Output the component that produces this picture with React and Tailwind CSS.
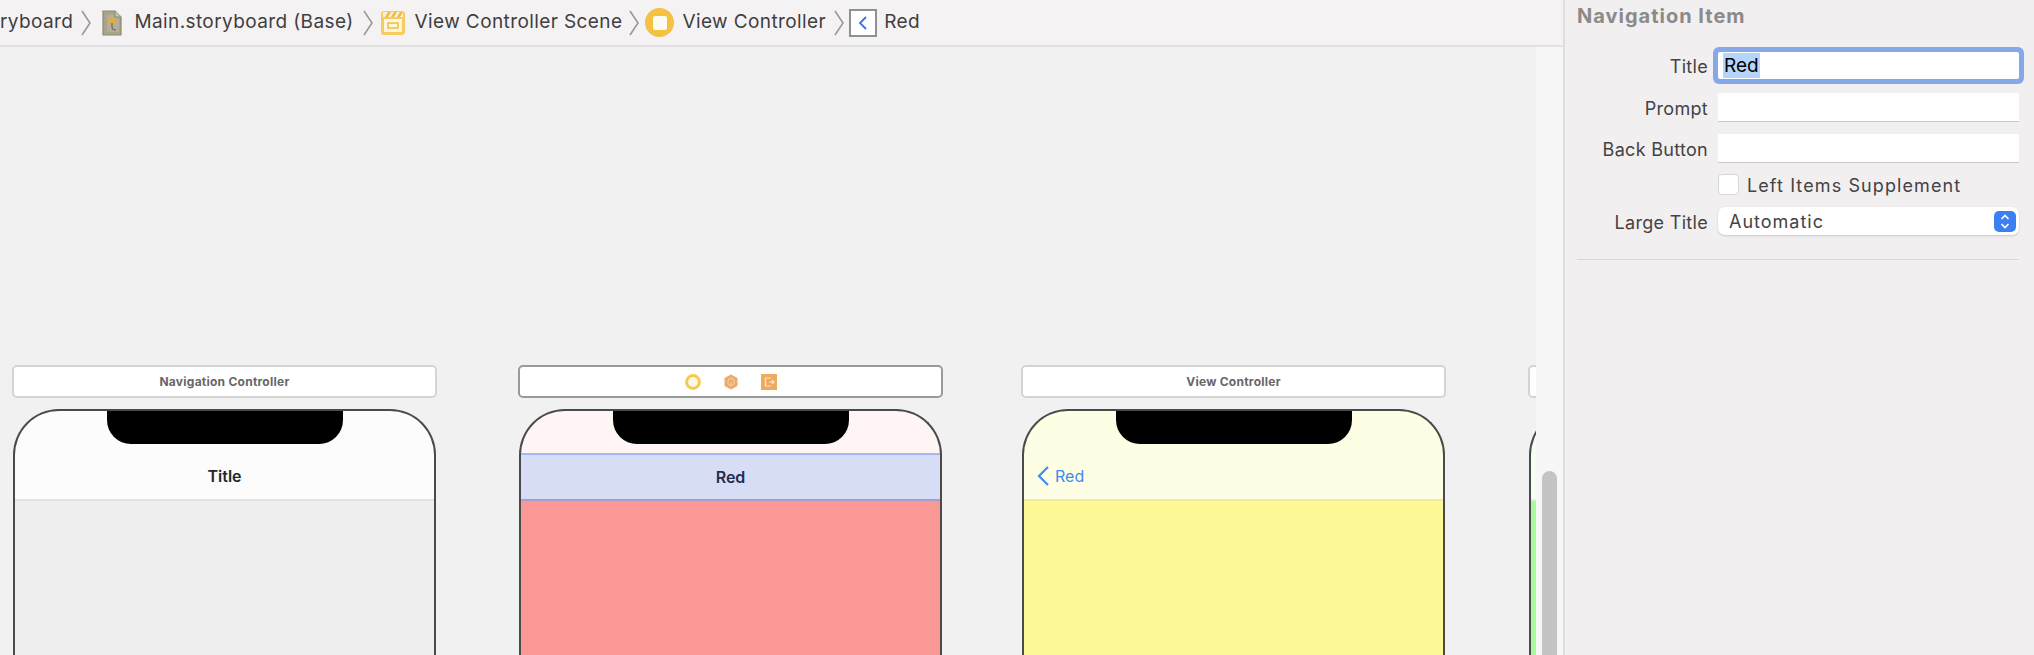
import React from "react";

const font = { fontFamily: "Inter, 'Liberation Sans', sans-serif" };

const Chevron = () => (
  <svg width="10" height="26" viewBox="0 0 10 26" className="shrink-0">
    <path d="M1 1 L9 13 L1 25" fill="none" stroke="#9a9899" strokeWidth="1.6" />
  </svg>
);

const FileIcon = () => (
  <svg width="20" height="26" viewBox="0 0 20 26" className="shrink-0">
    <path d="M1 1 H13 L19 7 V25 H1 Z" fill="#aaa48e" stroke="#8e8870" strokeWidth="1.2" />
    <path d="M13 1 V7 H19" fill="#c9c5b2" stroke="#8e8870" strokeWidth="1" />
    <path d="M5 5 H12 V8 H17 V22 H5 Z" fill="#b4ae9b" />
    <circle cx="10" cy="11" r="3.4" fill="#dfae3c" />
    <path d="M10 13 V17 Q10 20 14 20" fill="none" stroke="#6f6a55" strokeWidth="1.2" />
  </svg>
);

const SceneIcon = () => (
  <svg width="26" height="26" viewBox="0 0 26 26" className="shrink-0">
    <rect x="1" y="1" width="24" height="24" rx="3" fill="#f8cc5c" />
    <path d="M3 2 H23 V7 H3 Z" fill="#f5f0e0" />
    <path d="M5 7 L8 2 H11 L8 7 Z M11 7 L14 2 H17 L14 7 Z M17 7 L20 2 H23 L20 7 Z" fill="#f3bb3e" />
    <rect x="4" y="9" width="18" height="13" fill="#fdf6dc" />
    <rect x="8" y="13" width="10" height="5" fill="#fdf6dc" stroke="#efb93c" strokeWidth="1.4" />
  </svg>
);

const ControllerIcon = () => (
  <span className="flex h-[29px] w-[29px] shrink-0 items-center justify-center rounded-full bg-[#f5c143]">
    <span className="h-[14px] w-[14px] rounded-[2px] bg-[#fdfbf3]" />
  </span>
);

const BackItemIcon = () => (
  <span className="flex h-[28px] w-[28px] shrink-0 items-center justify-center border-2 border-[#8f8f96] bg-white">
    <svg width="10" height="16" viewBox="0 0 10 16">
      <path d="M8 2 L2 8 L8 14" fill="none" stroke="#3f6fe0" strokeWidth="1.8" />
    </svg>
  </span>
);

const Breadcrumbs = () => (
  <div className="flex h-[47px] shrink-0 items-center overflow-hidden border-b-2 border-[#e2e0e1] bg-[#f5f2f3] text-[19px] tracking-[0.4px] whitespace-nowrap text-[#3f3e40]">
    <span>ryboard</span>
    <span className="ml-[8px]"><Chevron /></span>
    <span className="ml-[11px]"><FileIcon /></span>
    <span className="ml-[12px]">Main.storyboard (Base)</span>
    <span className="ml-[9px]"><Chevron /></span>
    <span className="ml-[7px]"><SceneIcon /></span>
    <span className="ml-[9px]">View Controller Scene</span>
    <span className="ml-[7px]"><Chevron /></span>
    <span className="ml-[6px]"><ControllerIcon /></span>
    <span className="ml-[8px]">View Controller</span>
    <span className="ml-[8px]"><Chevron /></span>
    <span className="ml-[5px]"><BackItemIcon /></span>
    <span className="ml-[7px]">Red</span>
  </div>
);

const SceneIcons = () => (
  <div className="flex items-center gap-[22px]">
    <svg width="16" height="16" viewBox="0 0 16 16">
      <circle cx="8" cy="8" r="6.4" fill="#fdf8e6" stroke="#f6c94f" strokeWidth="3" />
    </svg>
    <svg width="16" height="16" viewBox="0 0 16 16">
      <path d="M8 0.5 L14.5 4 V12 L8 15.5 L1.5 12 V4 Z" fill="#eeaa6a" />
      <path d="M8 4 L11 6 V10 L8 12 L5 10 V6 Z M8 8 V12" fill="none" stroke="#f6cfa6" strokeWidth="1" />
    </svg>
    <svg width="16" height="16" viewBox="0 0 16 16">
      <rect width="16" height="16" fill="#eeaa5e" />
      <path d="M10 4 H4.5 V12 H10 M8 8 H13 M11 6 L13 8 L11 10" fill="none" stroke="#fbe8cf" strokeWidth="1.2" />
    </svg>
  </div>
);

const Scene = ({ className, label, selected, top, divider, body, children }) => (
  <div className={`w-[425px] shrink-0 ${className}`}>
    <div
      className={`flex h-[33px] items-center justify-center rounded-[5px] border-2 bg-white text-[12px] font-bold tracking-[0.25px] text-[#666667] ${
        selected ? "border-[#9a9a9a]" : "border-[#d4d4d4]"
      }`}
    >
      {label || <SceneIcons />}
    </div>
    <div
      className={`relative mx-px mt-[11px] h-[260px] overflow-hidden rounded-t-[46px] border-x-2 border-t-2 border-[#4a4a4a] ${top}`}
    >
      <div className="absolute top-0 left-1/2 h-[33px] w-[236px] -translate-x-1/2 rounded-b-[24px] bg-black" />
      <div className="h-[42px]" />
      <div className={`flex h-[48px] items-center justify-center border-b-2 ${divider}`}>{children}</div>
      <div className={`h-full ${body}`} />
    </div>
  </div>
);

const Canvas = () => (
  <div className="flex min-h-0 flex-1">
    <div className="flex min-w-0 flex-1 overflow-hidden bg-[#f2f1f1] pt-[318px]">
      <Scene
        className="ml-[12px]"
        label="Navigation Controller"
        top="bg-[#fcfcfc]"
        divider="border-[#e2e2e2]"
        body="bg-[#eeeeee]"
      >
        <span className="text-[16px] font-semibold text-[#262626]">Title</span>
      </Scene>
      <Scene
        className="ml-[81px]"
        selected
        top="bg-[#fef5f4]"
        divider="border-[#a79bd0] border-t-2 border-t-[#a3b8f5] bg-[#d7ddf5]"
        body="bg-[#f99895]"
      >
        <span className="text-[16px] font-semibold text-[#1f2d50]">Red</span>
      </Scene>
      <Scene
        className="ml-[78px]"
        label="View Controller"
        top="bg-[#fefee4]"
        divider="border-[#f0eba0]"
        body="bg-[#fdf896]"
      >
        <span className="flex w-full items-center pl-[12px] text-[16px] text-[#3e8bf0]">
          <svg width="14" height="22" viewBox="0 0 14 22" className="mr-[5px]">
            <path d="M12 2 L3 11 L12 20" fill="none" stroke="#3e8bf0" strokeWidth="2.2" />
          </svg>
          Red
        </span>
      </Scene>
      <Scene className="ml-[82px]" label=" " top="bg-[#f6fef2]" divider="border-[#d8f5d0]" body="bg-[#a6fb9e]" />
    </div>
    <div className="flex w-[27px] shrink-0 justify-center bg-[#f8f7f7] pt-[424px]">
      <div className="h-full w-[15px] rounded-t-full bg-[#c4c4c4]" />
    </div>
  </div>
);

const Label = ({ children }) => (
  <span className="w-[153px] shrink-0 pt-[2px] pr-[10px] text-right tracking-[0.3px] whitespace-nowrap">{children}</span>
);

const Field = ({ className = "" }) => (
  <div className={`h-[29px] w-[301px] border-b border-[#c9c7c8] bg-white ${className}`} />
);

const Inspector = () => (
  <div className="flex w-[471px] shrink-0 flex-col border-l-2 border-[#dfddde] bg-[#f2eff0] text-[18px] text-[#434244]">
    <div className="h-[52px] pl-[12px] text-[20px] leading-[32px] font-bold tracking-[1px] text-[#8b8989]">Navigation Item</div>
    <div className="flex h-[27px] items-center">
      <Label>Title</Label>
      <div className="flex h-[27px] w-[301px] items-center rounded-[2px] bg-white pl-[5px] text-[19px] text-black shadow-[0_0_0_5px_#87a8e8]">
        <span className="bg-[#b5d5fb] px-px leading-[25px]">Red</span>
      </div>
    </div>
    <div className="mt-[14px] flex h-[29px] items-center">
      <Label>Prompt</Label>
      <Field />
    </div>
    <div className="mt-[12px] flex h-[29px] items-center">
      <Label>Back Button</Label>
      <Field />
    </div>
    <div className="mt-[11px] flex h-[21px] items-center pl-[153px]">
      <span className="h-[21px] w-[21px] shrink-0 rounded-[4px] border border-[#d8d6d7] bg-white" />
      <span className="ml-[8px] pt-[2px] tracking-[1.1px] whitespace-nowrap">Left Items Supplement</span>
    </div>
    <div className="mt-[12px] flex h-[28px] items-center">
      <Label>Large Title</Label>
      <div className="flex h-[28px] w-[301px] items-center justify-between rounded-[7px] bg-white pr-[3px] pl-[11px] shadow-[0_1px_2px_#c8c6c7]">
        <span className="pt-[1px] tracking-[1px]">Automatic</span>
        <span className="flex h-[21px] w-[22px] items-center justify-center rounded-[5px] bg-[#3b7ff2]">
          <svg width="12" height="17" viewBox="0 0 12 17">
            <path d="M2.5 6 L6 2.5 L9.5 6 M2.5 11 L6 14.5 L9.5 11" fill="none" stroke="white" strokeWidth="1.6" />
          </svg>
        </span>
      </div>
    </div>
    <div className="mt-[24px] mr-[15px] ml-[12px] border-t border-[#d9d7d8]" />
  </div>
);

export default function App() {
  return (
    <div className="flex h-[655px] w-[2034px] overflow-hidden" style={font}>
      <div className="flex min-w-0 flex-1 flex-col">
        <Breadcrumbs />
        <Canvas />
      </div>
      <Inspector />
    </div>
  );
}
